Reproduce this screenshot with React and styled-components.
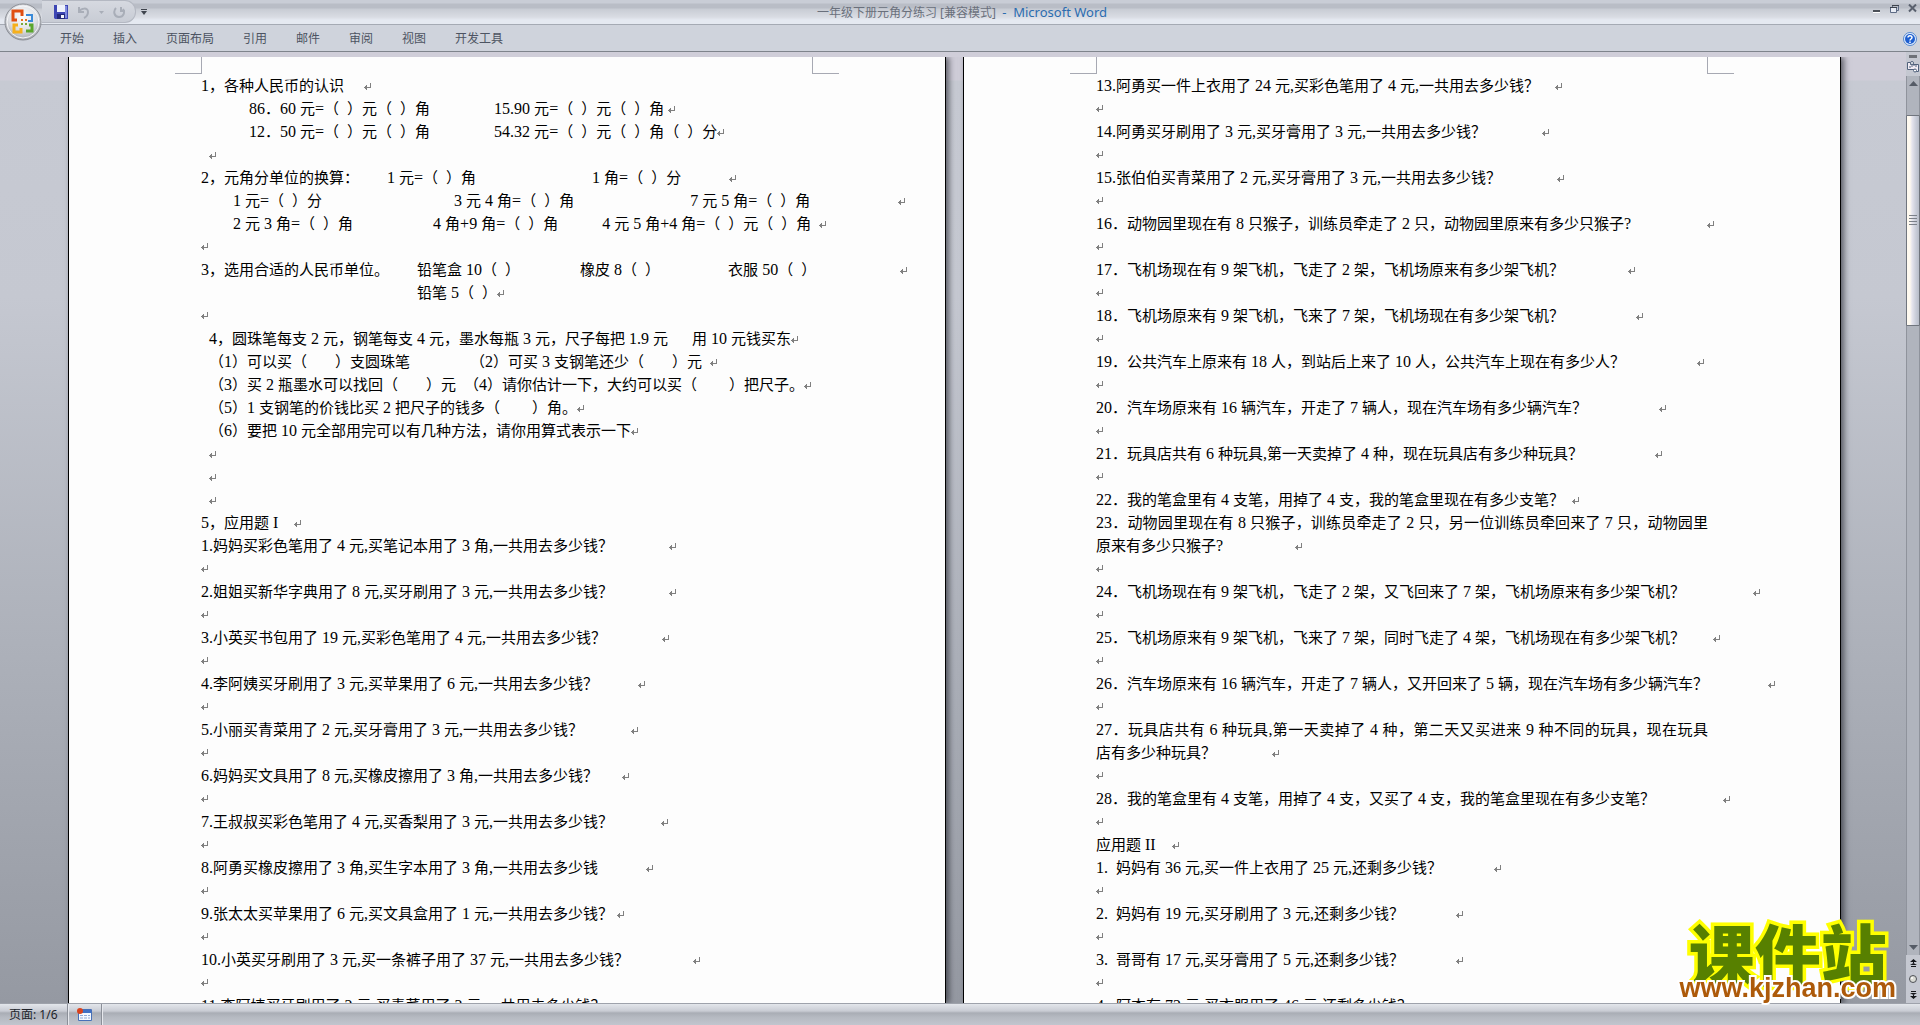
import React from "react";
import styled, { createGlobalStyle } from "styled-components";

const GlobalStyle = createGlobalStyle`
    * {
        box-sizing: border-box;
    }
    body {
        margin: 0;
        overflow: hidden;
        background: #c7cad3;
    }
    button {
        margin: 0;
        padding: 0;
        border: 0;
        background: none;
        font: inherit;
        color: inherit;
    }
    svg {
        display: block;
    }
`;

const Window = styled.div`
    display: flex;
    flex-direction: column;
    height: 100vh;
    overflow: hidden;
    color: #3f4652;
    font: 12px/16px "Noto Sans", "Noto Sans CJK SC", sans-serif;
`;

const Header = styled.header`
    position: relative;
`;

const TitleBar = styled.div`
    display: flex;
    align-items: flex-start;
    height: 25px;
    border-bottom: 1px solid #a5aab4;
    background: linear-gradient(#c9cdd6 0 3px, #b9bdc6 4px 8px, #c8ccd4 9px, #d9dce3 17px, #e5e9f1 20px 24px);
`;

const QuickAccess = styled.div`
    display: flex;
    align-items: center;
    gap: 9px;
    width: 94px;
    height: 23px;
    margin-left: 42px;
    padding: 1px 0 0 12px;
    border: 1px solid #b4b8c2;
    border-left: 0;
    border-radius: 0 11px 11px 0;
    background: linear-gradient(#d6d9e0, #c8ccd5);
`;

const SideZone = styled.div`
    display: flex;
    flex: 1;
    justify-content: ${(props) => (props.$end ? "flex-end" : "flex-start")};
    align-items: flex-start;
`;

const MoreButton = styled.button`
    margin: 9px 0 0 5px;
`;

const Title = styled.h1`
    margin: 2px 0 0;
    padding-left: 4px;
    font-size: 12px;
    font-weight: 400;
    line-height: 20px;
    white-space: pre;
    color: #6a707c;

    span {
        font-size: 13px;
        color: #2b6cb0;
    }
`;

const WindowButtons = styled.div`
    display: flex;
    gap: 9px;
    padding: 4px 3px 0 0;
`;

const OfficeButton = styled.button`
    position: absolute;
    left: 4px;
    top: 3px;
`;

const Ribbon = styled.nav`
    display: flex;
    align-items: center;
    gap: 1px;
    height: 27px;
    padding: 1px 3px 0 46px;
    border-bottom: 1px solid #7f848c;
    background: #cfd3dc;
`;

const Tab = styled.button`
    padding: 0 14px;
    color: #4d5462;
`;

const HelpButton = styled.button`
    margin-left: auto;
`;

const Body = styled.div`
    display: flex;
    flex: 1;
    min-height: 0;
`;

const Workspace = styled.main`
    display: flex;
    flex: 1;
    justify-content: center;
    gap: 17px;
    min-width: 0;
    padding-left: 3px;
    overflow: hidden;
    border-top: 5px solid #d0ced9;
    background: linear-gradient(#cfcdd8 0 23px, #c7cad3 24px, #c5c8d1 240px, #acb0b9 600px, #9599a2);
`;

const Page = styled.article`
    flex: none;
    width: 878px;
    border: solid #000;
    border-width: 0 1px;
    background: #fdfdfd;
    box-shadow: 3px 0 6px rgba(20, 22, 30, 0.6);
`;

const CropMarks = styled.div`
    display: flex;
    justify-content: space-between;
    height: 17px;
    padding: 0 106px;
`;

const CropMark = styled.span`
    width: 27px;
    border-bottom: 1px solid #a7a9b3;
    border-${(props) => props.$side}: 1px solid #a7a9b3;
`;

const PageText = styled.div`
    padding: 0 132px;
    color: #000;
    font-family: "Liberation Serif", "Noto Sans CJK SC", serif;
    font-size: 15px;
`;

const Line = styled.p`
    height: 23px;
    margin: 0;
    line-height: 23px;
    white-space: ${(props) => (props.$justify ? "pre-wrap" : "pre")};
    text-align-last: ${(props) => (props.$justify ? "justify" : "left")};
`;

const Latin = styled.span`
    font-size: 16px;
`;

const Mark = styled.svg`
    display: inline-block;
`;

const ScrollBar = styled.aside`
    display: flex;
    flex-direction: column;
    width: 14px;
    background: #c5c8d1;
`;

const ScrollTop = styled.div`
    display: flex;
    flex-direction: column;
    align-items: center;
    gap: 3px;
    height: 24px;
    padding-top: 3px;
`;

const Splitter = styled.div`
    width: 8px;
    height: 3px;
    background: #6e7178;
`;

const Track = styled.div`
    display: flex;
    flex: 1;
    flex-direction: column;
    align-items: center;
    border: solid #8f939c;
    border-width: 0 1px;
    background: #b0b4bd;
`;

const ArrowButton = styled.button`
    display: flex;
    align-items: center;
    justify-content: center;
    width: 12px;
    height: 15px;
`;

const Thumb = styled.div`
    display: flex;
    flex-direction: column;
    justify-content: center;
    align-items: center;
    gap: 1px;
    width: 14px;
    height: 211px;
    margin: 24px 0 auto;
    border: 1px solid #70757e;
    border-radius: 1px;
    background: linear-gradient(90deg, #fffaf0 0 3px, #e6e5ee 5px, #c8ccd8 9px, #b8bdc9);

    i {
        width: 8px;
        height: 1px;
        margin-bottom: 1px;
        background: #7b8089;
    }
`;

const Browse = styled.div`
    display: flex;
    flex-direction: column;
    align-items: center;
    justify-content: space-around;
    height: 48px;
`;

const StatusBar = styled.footer`
    display: flex;
    align-items: stretch;
    height: 22px;
    border-top: 1px solid #9ea2ab;
    background: linear-gradient(#e3e6eb, #c9ccd4 7px, #a9adb5 9px, #b5b9c1 13px, #c1c5ce);
    color: #20242b;
`;

const StatusButton = styled.button`
    display: flex;
    align-items: center;
    padding: 0 9px;
    border-right: 1px solid #8b8f98;
    box-shadow: 1px 0 #e6e8ed;
`;

const Watermark = styled.div`
    position: fixed;
    right: 24px;
    bottom: 24px;
    display: flex;
    flex-direction: column;
    align-items: center;
`;

const WatermarkName = styled.strong`
    color: #578000;
    font: 900 66px/48px "Noto Sans CJK SC", sans-serif;
    -webkit-text-stroke: 7px #ffff00;
    paint-order: stroke fill;
`;

const WatermarkLink = styled.a`
    color: #ad5a0a;
    font: 700 27px/26px "Liberation Sans", sans-serif;
    text-decoration: none;
    -webkit-text-stroke: 4px #fff;
    paint-order: stroke fill;
`;

const tabs = ["开始", "插入", "页面布局", "引用", "邮件", "审阅", "视图", "开发工具"];

// A line is a list of texts and numbers; a number is that many spaces.
const blank = [];

const leftPage = [
    ["1，各种人民币的认识", 5],
    [12, "86．60 元=（  ）元（  ）角", 16, "15.90 元=（  ）元（  ）角", 1],
    [12, "12．50 元=（  ）元（  ）角", 16, "54.32 元=（  ）元（  ）角（  ）分"],
    [2],
    ["2，元角分单位的换算：", 7, "1 元=（  ）角", 29, "1 角=（  ）分", 12],
    [8, "1 元=（  ）分", 33, "3 元 4 角=（  ）角", 29, "7 元 5 角=（  ）角", 22],
    [8, "2 元 3 角=（  ）角", 20, "4 角+9 角=（  ）角", 11, "4 元 5 角+4 角=（  ）元（  ）角", 2],
    blank,
    ["3，选用合适的人民币单位。", 7, "铅笔盒 10（  ）", 15, "橡皮 8（  ）", 17, "衣服 50（  ）", 21],
    [54, "铅笔 5（  ）"],
    blank,
    [2, "4，圆珠笔每支 2 元，钢笔每支 4 元，墨水每瓶 3 元，尺子每把 1.9 元", 6, "用 10 元钱买东"],
    [2, "（1）可以买（", 7, "）支圆珠笔", 15, "（2）可买 3 支钢笔还少（", 7, "）元", 2],
    [2, "（3）买 2 瓶墨水可以找回（", 7, "）元", 2, "（4）请你估计一下，大约可以买（", 8, "）把尺子。"],
    [2, "（5）1 支钢笔的价钱比买 2 把尺子的钱多（", 8, "）角。"],
    [2, "（6）要把 10 元全部用完可以有几种方法，请你用算式表示一下"],
    [2],
    [2],
    [2],
    ["5，应用题 I", 4],
    ["1.妈妈买彩色笔用了 4 元,买笔记本用了 3 角,一共用去多少钱？", 14],
    blank,
    ["2.姐姐买新华字典用了 8 元,买牙刷用了 3 元,一共用去多少钱？", 14],
    blank,
    ["3.小英买书包用了 19 元,买彩色笔用了 4 元,一共用去多少钱？", 14],
    blank,
    ["4.李阿姨买牙刷用了 3 元,买苹果用了 6 元,一共用去多少钱？", 10],
    blank,
    ["5.小丽买青菜用了 2 元,买牙膏用了 3 元,一共用去多少钱？", 12],
    blank,
    ["6.妈妈买文具用了 8 元,买橡皮擦用了 3 角,一共用去多少钱？", 6],
    blank,
    ["7.王叔叔买彩色笔用了 4 元,买香梨用了 3 元,一共用去多少钱？", 12],
    blank,
    ["8.阿勇买橡皮擦用了 3 角,买生字本用了 3 角,一共用去多少钱", 12],
    blank,
    ["9.张太太买苹果用了 6 元,买文具盒用了 1 元,一共用去多少钱？", 1],
    blank,
    ["10.小英买牙刷用了 3 元,买一条裤子用了 37 元,一共用去多少钱？", 16],
    blank,
    ["11.李阿姨买牙刷用了 2 元,买青菜用了 3 元,一共用去多少钱？"],
];

const rightPage = [
    ["13.阿勇买一件上衣用了 24 元,买彩色笔用了 4 元,一共用去多少钱？", 4],
    blank,
    ["14.阿勇买牙刷用了 3 元,买牙膏用了 3 元,一共用去多少钱？", 14],
    blank,
    ["15.张伯伯买青菜用了 2 元,买牙膏用了 3 元,一共用去多少钱？", 14],
    blank,
    ["16．动物园里现在有 8 只猴子，训练员牵走了 2 只，动物园里原来有多少只猴子?", 19],
    blank,
    ["17．飞机场现在有 9 架飞机，飞走了 2 架，飞机场原来有多少架飞机？", 16],
    blank,
    ["18．飞机场原来有 9 架飞机，飞来了 7 架，飞机场现在有多少架飞机？", 18],
    blank,
    ["19．公共汽车上原来有 18 人，到站后上来了 10 人，公共汽车上现在有多少人？", 18],
    blank,
    ["20．汽车场原来有 16 辆汽车，开走了 7 辆人，现在汽车场有多少辆汽车？", 18],
    blank,
    ["21．玩具店共有 6 种玩具,第一天卖掉了 4 种，现在玩具店有多少种玩具？", 18],
    blank,
    ["22．我的笔盒里有 4 支笔，用掉了 4 支，我的笔盒里现在有多少支笔？", 2],
    { full: "23．动物园里现在有 8 只猴子，训练员牵走了 2 只，另一位训练员牵回来了 7 只，动物园里" },
    ["原来有多少只猴子?", 18],
    blank,
    ["24．飞机场现在有 9 架飞机，飞走了 2 架，又飞回来了 7 架，飞机场原来有多少架飞机？", 17],
    blank,
    ["25．飞机场原来有 9 架飞机，飞来了 7 架，同时飞走了 4 架，飞机场现在有多少架飞机？", 7],
    blank,
    ["26．汽车场原来有 16 辆汽车，开走了 7 辆人，又开回来了 5 辆，现在汽车场有多少辆汽车？", 15],
    blank,
    { full: "27．玩具店共有 6 种玩具,第一天卖掉了 4 种，第二天又买进来 9 种不同的玩具，现在玩具" },
    ["店有多少种玩具？", 14],
    blank,
    ["28．我的笔盒里有 4 支笔，用掉了 4 支，又买了 4 支，我的笔盒里现在有多少支笔？", 17],
    blank,
    ["应用题 II", 4],
    ["1.  妈妈有 36 元,买一件上衣用了 25 元,还剩多少钱？", 13],
    blank,
    ["2.  妈妈有 19 元,买牙刷用了 3 元,还剩多少钱？", 13],
    blank,
    ["3.  哥哥有 17 元,买牙膏用了 5 元,还剩多少钱？", 13],
    blank,
    ["4.  阿杰有 72 元,买衣服用了 46 元,还剩多少钱？"],
];

// Digits and spaces are set one size larger than the Chinese characters.
function MixedText({ children }) {
    return children
        .split(/([\x20-\x7e]+)/)
        .map((run, i) => (i % 2 ? <Latin key={i}>{run}</Latin> : run));
}

function ReturnMark() {
    return (
        <Mark width="8" height="8" viewBox="0 0 8 8" aria-hidden="true" shapeRendering="crispEdges">
            <path d="M6 0h1v5H6zM2 4h5v1H2zM0 4h1v1H0zM1 3h1v3H1zM2 2h1v5H2z" fill="#808080" />
        </Mark>
    );
}

function TextLine({ line }) {
    if (line.full) {
        return (
            <Line $justify>
                <MixedText>{line.full}</MixedText>
            </Line>
        );
    }
    const text = line.map((part) => (typeof part === "number" ? " ".repeat(part) : part)).join("");
    return (
        <Line>
            <MixedText>{text}</MixedText>
            <ReturnMark />
        </Line>
    );
}

function DocumentPage({ lines }) {
    return (
        <Page lang="zh-CN">
            <CropMarks>
                <CropMark $side="right" />
                <CropMark $side="left" />
            </CropMarks>
            <PageText>
                {lines.map((line, i) => (
                    <TextLine key={i} line={line} />
                ))}
            </PageText>
        </Page>
    );
}

function OfficeLogo() {
    return (
        <svg width="39" height="39" viewBox="0 0 39 39">
            <defs>
                <radialGradient id="orb" cx="50%" cy="35%" r="65%">
                    <stop offset="0" stopColor="#ffffff" />
                    <stop offset="0.6" stopColor="#dddfe4" />
                    <stop offset="1" stopColor="#a4a7ae" />
                </radialGradient>
            </defs>
            <circle cx="19" cy="19" r="18" fill="url(#orb)" stroke="#8b8e95" />
            <circle cx="19" cy="19" r="16" fill="none" stroke="#f6f7f9" />
            <g fill="none" strokeWidth="3">
                <path d="M13 17H9V8h9v5" stroke="#e04e12" />
                <path d="M22 12h6v6h-4" stroke="#3a8ad8" strokeWidth="2" />
                <path d="M14 22h-4v7h7v-4" stroke="#f6b01c" />
                <path d="M22 28h6v-6h-3" stroke="#5aa62c" />
            </g>
            <path d="M17 16h2v2h-2zM21 16h2v2h-2z" fill="#e8731f" />
            <path d="M17 20h2v2h-2zM21 20h2v2h-2z" fill="#78a83c" />
        </svg>
    );
}

function SaveIcon() {
    return (
        <svg width="14" height="14" viewBox="0 0 14 14">
            <path d="M0 0h14v14H1L0 13z" fill="#3d46b4" />
            <path d="M3 0h8v7H3z" fill="#eef2fb" />
            <path d="M11 1h2v12h-2z" fill="#7f8be0" />
            <path d="M3 9h8v5H3z" fill="#23297c" />
            <path d="M7 10h3v3H7z" fill="#f4f6fc" />
        </svg>
    );
}

function UndoIcon() {
    return (
        <svg width="13" height="13" viewBox="0 0 13 13" fill="none" stroke="#a9aeb8" strokeWidth="2">
            <path d="M2 1v5h5M2 6c2-4 9-5 9 0 0 3-2 5-4 6" />
        </svg>
    );
}

function RedoIcon() {
    return (
        <svg width="13" height="13" viewBox="0 0 13 13" fill="none" stroke="#a9aeb8" strokeWidth="2">
            <path d="M8 1v4h4M3 2C0 5 1 11 6 11c5 0 6-5 4-8" />
        </svg>
    );
}

function Caret({ up, color = "#555b66", width = 9 }) {
    return (
        <svg width={width} height="5" viewBox="0 0 9 5">
            <path d={up ? "M0 5l4.5-5L9 5z" : "M0 0h9L4.5 5z"} fill={color} />
        </svg>
    );
}

function PageJump({ up }) {
    return (
        <svg width="7" height="8" viewBox="0 0 7 8" fill="#15171b">
            <path d={up ? "M0 3l3.5-3L7 3zM3 3h1v1H3zM0 6l3.5-2L7 6zM1 7h5v1H1z" : "M1 0h5v1H1zM0 2h7L3.5 4zM3 4h1v1H3zM0 5h7L3.5 8z"} />
        </svg>
    );
}

function App() {
    return (
        <Window>
            <GlobalStyle />
            <Header>
                <TitleBar>
                    <SideZone>
                        <QuickAccess>
                            <button aria-label="保存"><SaveIcon /></button>
                            <button aria-label="撤消"><UndoIcon /></button>
                            <button aria-label="撤消列表"><Caret width={5} color="#a9aeb8" /></button>
                            <button aria-label="重复"><RedoIcon /></button>
                        </QuickAccess>
                        <MoreButton aria-label="自定义快速访问工具栏">
                            <svg width="6" height="6" viewBox="0 0 6 6" fill="#3f444d">
                                <path d="M0 0h6v1H0zM0 2h6L3 6z" />
                            </svg>
                        </MoreButton>
                    </SideZone>
                    <Title>
                        一年级下册元角分练习 [兼容模式]  <span>-  Microsoft Word</span>
                    </Title>
                    <SideZone $end>
                        <WindowButtons>
                            <button aria-label="最小化">
                                <svg width="9" height="9" viewBox="0 0 9 9">
                                    <path d="M1 6h7v2H1z" fill="#4b5058" />
                                    <path d="M1 8h7v1H1z" fill="#fff" />
                                </svg>
                            </button>
                            <button aria-label="向下还原">
                                <svg width="9" height="8" viewBox="0 0 9 8" fill="none" stroke="#5d6b85">
                                    <path d="M2.5 2V.5h6v5H7" />
                                    <path d="M.5 2.5h6v5h-6z" fill="#e8ecf4" />
                                    <path d="M0 2.5h7M2 .5h7" stroke="#3f444d" />
                                </svg>
                            </button>
                            <button aria-label="关闭">
                                <svg width="9" height="9" viewBox="0 0 9 9" fill="none" stroke="#59606e" strokeWidth="2">
                                    <path d="M1 .5l7 7M8 .5l-7 7" />
                                </svg>
                            </button>
                        </WindowButtons>
                    </SideZone>
                </TitleBar>
                <Ribbon>
                    {tabs.map((tab) => (
                        <Tab key={tab}>{tab}</Tab>
                    ))}
                    <HelpButton aria-label="帮助">
                        <svg width="14" height="14" viewBox="0 0 14 14">
                            <circle cx="7" cy="7" r="6.5" fill="#e6effb" stroke="#5688cf" />
                            <circle cx="7" cy="7" r="5" fill="#1f5fd0" />
                            <path d="M5 5.5c0-2.5 4-2.5 4 0 0 1.5-2 1.5-2 3M7 9.5V11" fill="none" stroke="#fff" strokeWidth="1.5" />
                        </svg>
                    </HelpButton>
                </Ribbon>
                <OfficeButton aria-label="Office 按钮"><OfficeLogo /></OfficeButton>
            </Header>
            <Body>
                <Workspace>
                    <DocumentPage lines={leftPage} />
                    <DocumentPage lines={rightPage} />
                </Workspace>
                <ScrollBar>
                    <ScrollTop>
                        <Splitter />
                        <button aria-label="标尺">
                            <svg width="12" height="12" viewBox="0 0 12 12">
                                <path d="M.5 1.5h3v2h8v7h-3v-2h-8z" fill="#f1ecf4" stroke="#52627c" />
                                <path d="M5 4v2M7 4v1M9 4v2M3 5v2" stroke="#52627c" />
                                <circle cx="5" cy="2" r="1.5" fill="#fff" stroke="#52627c" />
                                <circle cx="8" cy="9.5" r="1.5" fill="#fff" stroke="#52627c" />
                            </svg>
                        </button>
                    </ScrollTop>
                    <Track>
                        <ArrowButton aria-label="向上滚动"><Caret up /></ArrowButton>
                        <Thumb>
                            <i /><i /><i /><i />
                        </Thumb>
                        <ArrowButton aria-label="向下滚动"><Caret /></ArrowButton>
                    </Track>
                    <Browse>
                        <button aria-label="前一页"><PageJump up /></button>
                        <button aria-label="选择浏览对象">
                            <svg width="8" height="8" viewBox="0 0 8 8">
                                <circle cx="4" cy="4" r="3.5" fill="#d9dad4" stroke="#4c4f55" />
                                <circle cx="3" cy="3" r="1" fill="#fff" />
                            </svg>
                        </button>
                        <button aria-label="下一页"><PageJump /></button>
                    </Browse>
                </ScrollBar>
            </Body>
            <StatusBar>
                <StatusButton>页面: 1/6</StatusButton>
                <StatusButton aria-label="录制宏">
                    <svg width="15" height="13" viewBox="0 0 15 13">
                        <path d="M1.5 1.5h13v11h-13z" fill="#f4f8ff" stroke="#4770b8" />
                        <path d="M2 2h12v3H2z" fill="#3f6fc4" />
                        <path d="M3 7h3v1H3zM7 7h3v1H7zM11 7h2v1h-2zM3 9.5h3v1H3zM7 9.5h3v1H7zM11 9.5h2v1h-2z" fill="#8fa9d8" />
                        <circle cx="3" cy="3" r="3" fill="#d9431e" />
                    </svg>
                </StatusButton>
            </StatusBar>
            <Watermark>
                <WatermarkName>课件站</WatermarkName>
                <WatermarkLink href="#kjzhan">www.kjzhan.com</WatermarkLink>
            </Watermark>
        </Window>
    );
}

export default App;
